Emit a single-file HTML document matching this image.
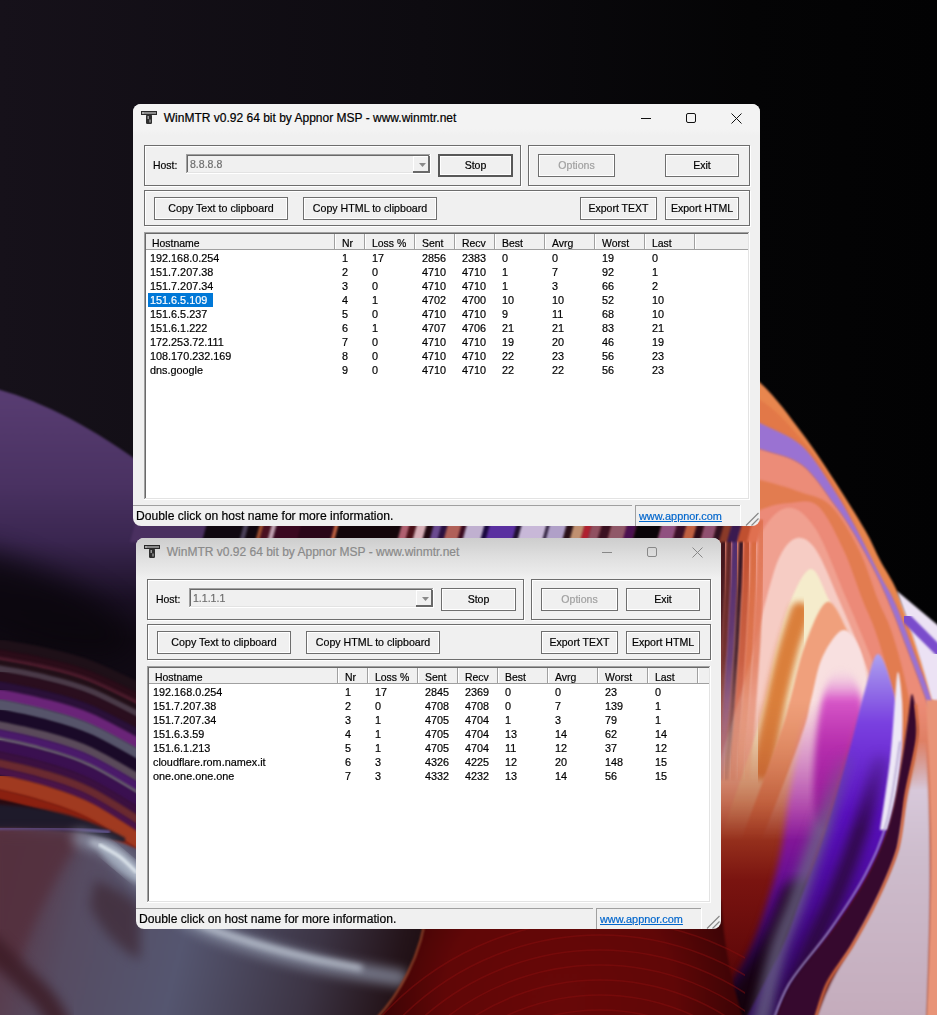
<!DOCTYPE html>
<html><head><meta charset="utf-8">
<style>
html,body{margin:0;padding:0;width:937px;height:1015px;overflow:hidden;background:#08060c;font-family:"Liberation Sans", sans-serif;}
div{position:absolute;box-sizing:content-box}
.t{white-space:nowrap;line-height:1;transform-origin:0 0;-webkit-text-stroke:0.2px currentColor}
</style></head><body>
<svg style="position:absolute;left:0;top:0" width="937" height="1015" viewBox="0 0 937 1015">
<defs>
 <linearGradient id="gTop" x1="0" y1="0" x2="1" y2="0">
  <stop offset="0" stop-color="#16111a"/><stop offset="0.45" stop-color="#0d0b10"/><stop offset="0.8" stop-color="#040405"/><stop offset="1" stop-color="#020203"/>
 </linearGradient>
 <linearGradient id="gPurp" x1="0" y1="380" x2="0" y2="640" gradientUnits="userSpaceOnUse">
  <stop offset="0" stop-color="#5a3e74"/><stop offset="0.4" stop-color="#4a3262"/><stop offset="0.62" stop-color="#3a2650"/><stop offset="0.85" stop-color="#1a1024"/><stop offset="1" stop-color="#100a14"/>
 </linearGradient>
 <linearGradient id="gGray" x1="0" y1="850" x2="430" y2="960" gradientUnits="userSpaceOnUse">
  <stop offset="0" stop-color="#5a3442"/><stop offset="0.2" stop-color="#564c62"/><stop offset="0.45" stop-color="#555670"/><stop offset="0.75" stop-color="#3c3444"/><stop offset="0.93" stop-color="#24141a"/><stop offset="1" stop-color="#1c0c10"/>
 </linearGradient>
 <radialGradient id="gRed" cx="560" cy="1000" r="230" gradientUnits="userSpaceOnUse">
  <stop offset="0" stop-color="#680808"/><stop offset="0.5" stop-color="#600707"/><stop offset="0.8" stop-color="#3a0406"/><stop offset="1" stop-color="#1a0206"/>
 </radialGradient>
 <linearGradient id="gLowR" x1="721" y1="900" x2="903" y2="964" gradientUnits="userSpaceOnUse">
  <stop offset="0" stop-color="#640808"/><stop offset="0.2" stop-color="#6a0a0a"/><stop offset="0.28" stop-color="#3a0a80"/><stop offset="0.4" stop-color="#5a5080"/><stop offset="0.52" stop-color="#5a5070"/><stop offset="0.6" stop-color="#2a0a30"/><stop offset="0.7" stop-color="#4a0c8a"/><stop offset="0.8" stop-color="#2a0830"/><stop offset="1" stop-color="#1c0614"/>
 </linearGradient>
 <radialGradient id="gMag" cx="842" cy="735" r="70" gradientUnits="userSpaceOnUse">
  <stop offset="0" stop-color="#b020a8"/><stop offset="0.6" stop-color="#c040b4"/><stop offset="1" stop-color="#e8a0d8" stop-opacity="0"/>
 </radialGradient>
 <linearGradient id="gPur2" x1="0" y1="650" x2="0" y2="1015" gradientUnits="userSpaceOnUse">
  <stop offset="0" stop-color="#b0a8f0"/><stop offset="0.2" stop-color="#7a40e0"/><stop offset="0.45" stop-color="#5a10c0"/><stop offset="0.7" stop-color="#4a0a98"/><stop offset="1" stop-color="#2a0650"/>
 </linearGradient>
 <linearGradient id="gLav" x1="0" y1="700" x2="0" y2="1015" gradientUnits="userSpaceOnUse">
  <stop offset="0" stop-color="#e4d8ec"/><stop offset="0.5" stop-color="#cdbccc"/><stop offset="1" stop-color="#c4acbc"/>
 </linearGradient>
 <linearGradient id="gFadeIn" x1="0" y1="700" x2="0" y2="840" gradientUnits="userSpaceOnUse">
  <stop offset="0" stop-color="#fff" stop-opacity="0"/><stop offset="1" stop-color="#fff" stop-opacity="1"/>
 </linearGradient>
 <mask id="mIn" maskUnits="userSpaceOnUse" x="600" y="600" width="400" height="500"><rect x="600" y="600" width="400" height="500" fill="url(#gFadeIn)"/></mask>
 <linearGradient id="gLeftLow" x1="0" y1="680" x2="0" y2="1025" gradientUnits="userSpaceOnUse">
  <stop offset="0" stop-color="#d07840"/><stop offset="0.35" stop-color="#b04a28"/><stop offset="0.58" stop-color="#7a1410"/><stop offset="0.78" stop-color="#640a0a"/><stop offset="1" stop-color="#3a0406"/>
 </linearGradient>
 <linearGradient id="gBandM" x1="0" y1="700" x2="0" y2="1025" gradientUnits="userSpaceOnUse">
  <stop offset="0" stop-color="#c040b0"/><stop offset="0.33" stop-color="#9a1c9c"/><stop offset="0.6" stop-color="#5a0c90"/><stop offset="0.8" stop-color="#2a0650"/><stop offset="1" stop-color="#16030c"/>
 </linearGradient>
 <linearGradient id="gVst" x1="0" y1="520" x2="0" y2="800" gradientUnits="userSpaceOnUse">
  <stop offset="0" stop-color="#fff" stop-opacity="1"/><stop offset="0.5" stop-color="#fff" stop-opacity="0.8"/><stop offset="1" stop-color="#fff" stop-opacity="0"/>
 </linearGradient>
 <mask id="mVst" maskUnits="userSpaceOnUse" x="690" y="500" width="100" height="320"><rect x="690" y="500" width="100" height="320" fill="url(#gVst)"/></mask>
 <linearGradient id="gMag2" x1="0" y1="668" x2="0" y2="830" gradientUnits="userSpaceOnUse">
  <stop offset="0" stop-color="#f0c8e8" stop-opacity="0"/><stop offset="0.2" stop-color="#d858c8"/><stop offset="0.5" stop-color="#b82cb0"/><stop offset="1" stop-color="#8a1490"/>
 </linearGradient>
 <linearGradient id="gFadeIn2" x1="0" y1="740" x2="0" y2="830" gradientUnits="userSpaceOnUse">
  <stop offset="0" stop-color="#fff" stop-opacity="0"/><stop offset="1" stop-color="#fff" stop-opacity="1"/>
 </linearGradient>
 <mask id="mIn2" maskUnits="userSpaceOnUse" x="700" y="700" width="300" height="400"><rect x="700" y="700" width="300" height="400" fill="url(#gFadeIn2)"/></mask>
 <linearGradient id="gLavF" x1="0" y1="740" x2="0" y2="790" gradientUnits="userSpaceOnUse">
  <stop offset="0" stop-color="#fff" stop-opacity="0"/><stop offset="1" stop-color="#fff" stop-opacity="1"/>
 </linearGradient>
 <mask id="mLav" maskUnits="userSpaceOnUse" x="780" y="700" width="200" height="340"><rect x="780" y="700" width="200" height="340" fill="url(#gLavF)"/></mask>
 <filter color-interpolation-filters="sRGB" id="b12" x="-30%" y="-60%" width="160%" height="220%"><feGaussianBlur stdDeviation="14"/></filter>
 <filter color-interpolation-filters="sRGB" id="b1" x="-5%" y="-5%" width="110%" height="110%"><feGaussianBlur stdDeviation="0.8"/></filter>
 <filter color-interpolation-filters="sRGB" id="b2" x="-10%" y="-10%" width="120%" height="120%"><feGaussianBlur stdDeviation="1.8"/></filter>
 <filter color-interpolation-filters="sRGB" id="b3" x="-10%" y="-10%" width="120%" height="120%"><feGaussianBlur stdDeviation="3"/></filter>
 <filter color-interpolation-filters="sRGB" id="b6" x="-20%" y="-20%" width="140%" height="140%"><feGaussianBlur stdDeviation="6"/></filter>
</defs><rect x="0" y="0" width="937" height="1015" fill="url(#gTop)"/><path d="M-10 387 C40 400 90 425 150 470 L150 720 L-10 720 Z" fill="url(#gPurp)" filter="url(#b1)"/><ellipse cx="10" cy="600" rx="130" ry="40" transform="rotate(20 10 600)" fill="#0a060c" opacity="0.85" filter="url(#b12)"/><path d="M-10.0 643.4 C-1.7 644.9 23.3 648.5 40.0 652.3 C56.7 656.1 70.0 658.4 90.0 666.1 C110.0 673.8 148.3 693.1 160.0 698.5 " stroke="#1e1018" stroke-width="11.2" fill="none" stroke-linecap="round" filter="url(#b1)"/><path d="M-10.0 651.8 C-1.7 653.4 23.3 657.1 40.0 661.0 C56.7 664.8 70.0 667.2 90.0 675.1 C110.0 682.9 148.3 702.7 160.0 708.2 " stroke="#2a0c18" stroke-width="8.2" fill="none" stroke-linecap="round" filter="url(#b1)"/><path d="M-10.0 657.3 C-1.7 658.9 23.3 662.6 40.0 666.6 C56.7 670.5 70.0 672.9 90.0 680.9 C110.0 688.9 148.3 708.9 160.0 714.5 " stroke="#4a1a2a" stroke-width="5.2" fill="none" stroke-linecap="round" filter="url(#b1)"/><path d="M-10.0 661.8 C-1.7 663.4 23.3 667.2 40.0 671.2 C56.7 675.1 70.0 677.5 90.0 685.6 C110.0 693.7 148.3 714.0 160.0 719.7 " stroke="#221018" stroke-width="6.2" fill="none" stroke-linecap="round" filter="url(#b1)"/><path d="M-10.0 667.3 C-1.7 668.9 23.3 672.7 40.0 676.8 C56.7 680.8 70.0 683.2 90.0 691.4 C110.0 699.7 148.3 720.2 160.0 726.0 " stroke="#4a3a48" stroke-width="7.2" fill="none" stroke-linecap="round" filter="url(#b1)"/><path d="M-10.0 675.2 C-1.7 676.9 23.3 680.8 40.0 684.9 C56.7 689.0 70.0 691.5 90.0 699.9 C110.0 708.3 148.3 729.3 160.0 735.1 " stroke="#2a0e1e" stroke-width="11.2" fill="none" stroke-linecap="round" filter="url(#b1)"/><path d="M-10.0 684.2 C-1.7 685.8 23.3 689.9 40.0 694.1 C56.7 698.3 70.0 700.9 90.0 709.4 C110.0 718.0 148.3 739.4 160.0 745.4 " stroke="#2a1038" stroke-width="9.2" fill="none" stroke-linecap="round" filter="url(#b1)"/><path d="M-10.0 693.2 C-1.7 694.8 23.3 699.0 40.0 703.3 C56.7 707.6 70.0 710.2 90.0 718.9 C110.0 727.7 148.3 749.6 160.0 755.7 " stroke="#6a2478" stroke-width="11.2" fill="none" stroke-linecap="round" filter="url(#b1)"/><path d="M-10.0 703.1 C-1.7 704.8 23.3 709.1 40.0 713.5 C56.7 717.9 70.0 720.5 90.0 729.5 C110.0 738.4 148.3 760.9 160.0 767.2 " stroke="#56546a" stroke-width="11.2" fill="none" stroke-linecap="round" filter="url(#b1)"/><path d="M-10.0 714.1 C-1.7 715.8 23.3 720.2 40.0 724.7 C56.7 729.2 70.0 731.9 90.0 741.1 C110.0 750.3 148.3 773.3 160.0 779.8 " stroke="#1a0a28" stroke-width="13.2" fill="none" stroke-linecap="round" filter="url(#b1)"/><path d="M-10.0 724.0 C-1.7 725.8 23.3 730.3 40.0 734.9 C56.7 739.5 70.0 742.3 90.0 751.7 C110.0 761.1 148.3 784.6 160.0 791.2 " stroke="#5a4a5a" stroke-width="9.2" fill="none" stroke-linecap="round" filter="url(#b1)"/><path d="M-10.0 732.0 C-1.7 733.8 23.3 738.4 40.0 743.1 C56.7 747.7 70.0 750.6 90.0 760.1 C110.0 769.7 148.3 793.7 160.0 800.4 " stroke="#4a1a6a" stroke-width="9.2" fill="none" stroke-linecap="round" filter="url(#b1)"/><path d="M-10.0 737.5 C-1.7 739.3 23.3 743.9 40.0 748.7 C56.7 753.4 70.0 756.3 90.0 766.0 C110.0 775.6 148.3 799.9 160.0 806.7 " stroke="#6a6070" stroke-width="4.2" fill="none" stroke-linecap="round" filter="url(#b1)"/><path d="M-10.0 744.4 C-1.7 746.3 23.3 751.0 40.0 755.8 C56.7 760.6 70.0 763.5 90.0 773.4 C110.0 783.2 148.3 807.8 160.0 814.7 " stroke="#3a1050" stroke-width="12.2" fill="none" stroke-linecap="round" filter="url(#b1)"/><path d="M-10.0 753.9 C-1.7 755.8 23.3 760.6 40.0 765.5 C56.7 770.4 70.0 773.4 90.0 783.4 C110.0 793.4 148.3 818.5 160.0 825.5 " stroke="#3a1040" stroke-width="9.2" fill="none" stroke-linecap="round" filter="url(#b1)"/><path d="M-10.0 761.9 C-1.7 763.8 23.3 768.6 40.0 773.6 C56.7 778.6 70.0 781.7 90.0 791.9 C110.0 802.0 148.3 827.6 160.0 834.7 " stroke="#6a2a30" stroke-width="9.2" fill="none" stroke-linecap="round" filter="url(#b1)"/><path d="M-10.0 769.3 C-1.7 771.3 23.3 776.2 40.0 781.3 C56.7 786.4 70.0 789.4 90.0 799.8 C110.0 810.1 148.3 836.0 160.0 843.3 " stroke="#4a1448" stroke-width="8.2" fill="none" stroke-linecap="round" filter="url(#b1)"/><path d="M-10.0 780.3 C-1.7 782.3 23.3 787.3 40.0 792.5 C56.7 797.7 70.0 800.8 90.0 811.4 C110.0 822.0 148.3 848.5 160.0 855.9 " stroke="#a03a20" stroke-width="16.2" fill="none" stroke-linecap="round" filter="url(#b1)"/><path d="M-10.0 792.7 C-1.7 794.8 23.3 799.9 40.0 805.3 C56.7 810.6 70.0 813.8 90.0 824.6 C110.0 835.4 148.3 862.6 160.0 870.2 " stroke="#8a2010" stroke-width="11.2" fill="none" stroke-linecap="round" filter="url(#b1)"/><path d="M-10.0 800.7 C-1.7 802.8 23.3 808.0 40.0 813.4 C56.7 818.8 70.0 822.1 90.0 833.1 C110.0 844.1 148.3 871.6 160.0 879.3 " stroke="#2a0a10" stroke-width="7.2" fill="none" stroke-linecap="round" filter="url(#b1)"/><path d="M-10 804 C40 806 80 814 125 838 L125 842 L-10 832 Z" fill="#1e1a2a" filter="url(#b2)"/><path d="M-10 828 C50 828 100 832 140 850 C240 895 360 895 428 900 C425 950 400 995 372 1025 L-10 1025 Z" fill="url(#gGray)" filter="url(#b1)"/><path d="M-10 829 C30 828 70 828 110 832" stroke="#6a58a0" stroke-width="2.5" fill="none" filter="url(#b1)"/><path d="M-10 832 L85 832 C60 870 35 915 18 965 L-10 965 Z" fill="#54303e" opacity="0.9" filter="url(#b6)"/><path d="M-10.0 945.0 C-5.0 950.0 10.8 965.8 20.0 975.0 C29.2 984.2 38.3 991.7 45.0 1000.0 C51.7 1008.3 57.5 1020.8 60.0 1025.0 " stroke="#3c1c26" stroke-width="22" fill="none" stroke-linecap="round" opacity="0.85" filter="url(#b6)"/><path d="M95 880 C120 890 136 900 140 910 L140 960 C120 950 100 930 90 905 Z" fill="#3e2834" opacity="0.7" filter="url(#b6)"/><ellipse cx="122" cy="862" rx="30" ry="9" transform="rotate(40 122 862)" fill="#b0bccb" opacity="0.9" filter="url(#b3)"/><path d="M80.0 838.0 C85.0 840.0 100.0 843.3 110.0 850.0 C120.0 856.7 130.0 868.8 140.0 878.0 C150.0 887.2 160.0 897.0 170.0 905.0 C180.0 913.0 185.0 918.8 200.0 926.0 C215.0 933.2 238.3 941.3 260.0 948.0 C281.7 954.7 306.7 961.0 330.0 966.0 C353.3 971.0 388.3 976.0 400.0 978.0 " stroke="#9098ac" stroke-width="16" fill="none" stroke-linecap="round" opacity="0.75" filter="url(#b6)"/><path d="M92.0 842.0 C95.8 843.8 107.0 847.3 115.0 853.0 C123.0 858.7 130.8 867.7 140.0 876.0 C149.2 884.3 160.0 895.0 170.0 903.0 C180.0 911.0 186.7 917.5 200.0 924.0 C213.3 930.5 231.7 936.3 250.0 942.0 C268.3 947.7 291.7 953.7 310.0 958.0 C328.3 962.3 351.7 966.3 360.0 968.0 " stroke="#c4ccd8" stroke-width="5" fill="none" stroke-linecap="round" filter="url(#b3)"/><path d="M100.0 845.0 C103.3 847.0 114.0 852.5 120.0 857.0 C126.0 861.5 133.3 869.5 136.0 872.0 " stroke="#d8e0e8" stroke-width="3" fill="none" stroke-linecap="round" filter="url(#b1)"/><path d="M600.0 290.0 C616.7 298.0 673.3 322.6 700.0 338.0 C726.7 353.4 743.0 366.7 760.0 382.5 C777.0 398.3 789.7 416.8 802.0 433.0 C814.3 449.2 823.5 463.8 834.0 480.0 C844.5 496.2 857.3 516.7 865.0 530.0 C872.7 543.3 874.7 549.8 880.0 560.0 C885.3 570.2 890.7 576.8 897.0 591.0 C903.3 605.2 911.7 627.2 918.0 645.0 C924.3 662.8 928.0 677.2 935.0 698.0 C942.0 718.8 955.8 758.0 960.0 770.0 L960 1025 L600 1025 Z" fill="#e8864e" filter="url(#b1)"/><path d="M600.0 330.0 C616.7 338.3 673.3 368.3 700.0 380.0 C726.7 391.7 743.0 390.0 760.0 400.0 C777.0 410.0 789.7 426.0 802.0 440.0 C814.3 454.0 824.8 469.0 834.0 484.0 C843.2 499.0 849.3 514.0 857.0 530.0 C864.7 546.0 873.5 567.5 880.0 580.0 C886.5 592.5 889.8 591.7 896.0 605.0 C902.2 618.3 911.0 644.2 917.0 660.0 C923.0 675.8 927.3 685.8 932.0 700.0 C936.7 714.2 942.8 737.5 945.0 745.0 L945 1025 L600 1025 Z" fill="#e27848" filter="url(#b1)"/><path d="M620.0 400.0 C633.3 405.0 676.7 421.8 700.0 430.0 C723.3 438.2 743.0 443.2 760.0 449.0 C777.0 454.8 789.7 455.8 802.0 465.0 C814.3 474.2 825.5 492.8 834.0 504.0 C842.5 515.2 846.3 521.0 853.0 532.0 C859.7 543.0 867.5 557.0 874.0 570.0 C880.5 583.0 885.7 594.7 892.0 610.0 C898.3 625.3 906.0 646.2 912.0 662.0 C918.0 677.8 922.5 690.0 928.0 705.0 C933.5 720.0 942.2 744.2 945.0 752.0 L945 1025 L620 1025 Z" fill="#ec8c78" filter="url(#b1)"/><path d="M700.0 392.0 C710.0 397.2 743.0 414.0 760.0 423.0 C777.0 432.0 789.7 434.8 802.0 446.0 C814.3 457.2 824.8 476.0 834.0 490.0 C843.2 504.0 849.3 515.8 857.0 530.0 C864.7 544.2 873.5 562.5 880.0 575.0 C886.5 587.5 889.8 590.8 896.0 605.0 C902.2 619.2 911.0 644.2 917.0 660.0 C923.0 675.8 927.3 685.8 932.0 700.0 C936.7 714.2 942.8 737.5 945.0 745.0  L945 752 945.0 752.0 C942.2 744.2 933.5 720.0 928.0 705.0 C922.5 690.0 918.0 677.8 912.0 662.0 C906.0 646.2 898.3 625.3 892.0 610.0 C885.7 594.7 880.5 583.0 874.0 570.0 C867.5 557.0 859.7 543.0 853.0 532.0 C846.3 521.0 842.5 515.2 834.0 504.0 C825.5 492.8 814.3 474.2 802.0 465.0 C789.7 455.8 777.0 454.8 760.0 449.0 C743.0 443.2 723.3 438.2 700.0 430.0 C676.7 421.8 633.3 405.0 620.0 400.0  Z" fill="#9a72d2" filter="url(#b1)"/><path d="M620.0 455.0 C633.3 457.2 676.7 463.8 700.0 468.0 C723.3 472.2 743.3 476.0 760.0 480.0 C776.7 484.0 788.2 487.7 800.0 492.0 C811.8 496.3 821.2 496.3 831.0 506.0 C840.8 515.7 851.2 534.3 859.0 550.0 C866.8 565.7 872.7 586.7 878.0 600.0 C883.3 613.3 886.5 616.7 891.0 630.0 C895.5 643.3 901.0 661.7 905.0 680.0 C909.0 698.3 912.8 713.3 915.0 740.0 C917.2 766.7 917.5 823.3 918.0 840.0 L918 1025 L620 1025 Z" fill="#e27c50" filter="url(#b1)"/><path d="M620.0 560.0 C633.3 556.7 676.7 548.3 700.0 540.0 C723.3 531.7 745.0 516.2 760.0 510.0 C775.0 503.8 780.3 503.7 790.0 503.0 C799.7 502.3 809.1 498.2 818.0 506.0 C826.9 513.8 836.2 534.3 843.6 550.0 C851.0 565.7 857.4 586.7 862.6 600.0 C867.8 613.3 870.4 616.7 875.0 630.0 C879.6 643.3 885.3 661.7 890.0 680.0 C894.7 698.3 899.7 713.3 903.0 740.0 C906.3 766.7 908.8 823.3 910.0 840.0 L910 1025 L620 1025 Z" fill="#ec8a78" filter="url(#b1)"/><path d="M897 591 L940 627 L940 705 L932 700 C925 675 915 640 900 600 Z" fill="#ece2f4" filter="url(#b1)"/><path d="M906.0 618.0 C911.7 623.7 934.3 646.3 940.0 652.0 " stroke="#7a4ccc" stroke-width="10" fill="none" stroke-linecap="round" filter="url(#b1)"/><path d="M675.0 870.0 C685.0 828.3 721.2 675.0 735.0 620.0 C748.8 565.0 749.5 558.7 758.0 540.0 C766.5 521.3 776.5 510.0 786.0 508.0 C795.5 506.0 804.8 512.7 815.0 528.0 C825.2 543.3 837.5 578.0 847.0 600.0 C856.5 622.0 865.5 643.3 872.0 660.0 C878.5 676.7 880.5 683.3 886.0 700.0 C891.5 716.7 900.7 731.7 905.0 760.0 C909.3 788.3 910.8 851.7 912.0 870.0  Z" fill="#f0a090" filter="url(#b1)"/><path d="M685.0 870.0 C695.0 838.3 731.5 725.0 745.0 680.0 C758.5 635.0 760.2 620.7 766.0 600.0 C771.8 579.3 774.8 566.3 780.0 556.0 C785.2 545.7 791.0 539.0 797.0 538.0 C803.0 537.0 809.0 539.7 816.0 550.0 C823.0 560.3 831.7 583.3 839.0 600.0 C846.3 616.7 853.5 633.3 860.0 650.0 C866.5 666.7 871.7 681.7 878.0 700.0 C884.3 718.3 894.0 731.7 898.0 760.0 C902.0 788.3 901.3 851.7 902.0 870.0  Z" fill="#f6ccc4" filter="url(#b1)"/><path d="M710.0 870.0 C718.3 845.0 749.0 756.7 760.0 720.0 C771.0 683.3 770.8 670.0 776.0 650.0 C781.2 630.0 785.2 613.5 791.0 600.0 C796.8 586.5 804.7 569.0 811.0 569.0 C817.3 569.0 822.2 586.5 829.0 600.0 C835.8 613.5 845.2 633.3 852.0 650.0 C858.8 666.7 864.0 681.7 870.0 700.0 C876.0 718.3 884.3 731.7 888.0 760.0 C891.7 788.3 891.3 851.7 892.0 870.0  Z" fill="#f5eccc" filter="url(#b1)"/><path d="M800.0 612.0 C798.0 618.3 792.0 635.3 788.0 650.0 C784.0 664.7 780.3 680.0 776.0 700.0 C771.7 720.0 764.3 758.3 762.0 770.0 " stroke="#d8742c" stroke-width="20" fill="none" stroke-linecap="round" opacity="0.9" filter="url(#b3)"/><path d="M730.0 870.0 C738.0 848.3 768.0 768.3 778.0 740.0 C788.0 711.7 785.5 715.8 790.0 700.0 C794.5 684.2 798.8 661.3 805.0 645.0 C811.2 628.7 820.0 604.5 827.0 602.0 C834.0 599.5 841.8 620.3 847.0 630.0 C852.2 639.7 854.8 648.3 858.0 660.0 C861.2 671.7 862.7 683.3 866.0 700.0 C869.3 716.7 875.3 731.7 878.0 760.0 C880.7 788.3 881.3 851.7 882.0 870.0  Z" fill="#f0a07c" filter="url(#b1)"/><path d="M750.0 870.0 C758.3 848.3 789.8 768.3 800.0 740.0 C810.2 711.7 807.3 713.7 811.0 700.0 C814.7 686.3 816.7 669.7 822.0 658.0 C827.3 646.3 836.7 631.3 843.0 630.0 C849.3 628.7 855.5 638.3 860.0 650.0 C864.5 661.7 867.7 681.7 870.0 700.0 C872.3 718.3 872.7 731.7 874.0 760.0 C875.3 788.3 877.3 851.7 878.0 870.0  Z" fill="#f8e0e0" filter="url(#b1)"/><path d="M842 668 C862 672 868 720 864 760 C860 800 840 830 825 830 C812 830 812 790 815 750 C818 710 826 666 842 668 Z" fill="url(#gMag2)" filter="url(#b3)"/><g mask="url(#mIn)"><rect x="700" y="680" width="240" height="345" fill="url(#gLeftLow)"/><path d="M700.0 1030.0 C707.5 1018.3 733.7 981.7 745.0 960.0 C756.3 938.3 762.0 918.3 768.0 900.0 C774.0 881.7 777.3 868.3 781.0 850.0 C784.7 831.7 786.0 811.7 790.0 790.0 C794.0 768.3 800.0 736.7 805.0 720.0 C810.0 703.3 817.5 695.0 820.0 690.0  L865 690 865.0 690.0 C862.8 698.3 857.0 721.7 852.0 740.0 C847.0 758.3 840.5 781.7 835.0 800.0 C829.5 818.3 824.8 833.3 819.0 850.0 C813.2 866.7 806.3 883.3 800.0 900.0 C793.7 916.7 787.7 928.3 781.0 950.0 C774.3 971.7 763.5 1016.7 760.0 1030.0  Z" fill="url(#gBandM)" filter="url(#b3)"/><path d="M720.0 1040.0 C726.7 1030.8 749.2 1001.7 760.0 985.0 C770.8 968.3 778.3 954.2 785.0 940.0 C791.7 925.8 797.5 906.7 800.0 900.0 " stroke="#14020a" stroke-width="40" fill="none" stroke-linecap="round" opacity="0.85" filter="url(#b6)"/></g><path d="M740.0 1030.0 C746.8 1016.7 771.0 971.7 781.0 950.0 C791.0 928.3 793.7 916.7 800.0 900.0 C806.3 883.3 813.2 866.7 819.0 850.0 C824.8 833.3 829.5 818.3 835.0 800.0 C840.5 781.7 847.0 758.3 852.0 740.0 C857.0 721.7 860.7 704.3 865.0 690.0 C869.3 675.7 873.3 654.0 878.0 654.0 C882.7 654.0 889.2 675.7 893.0 690.0 C896.8 704.3 901.5 718.2 901.0 740.0 C900.5 761.8 895.5 798.5 890.0 821.0 C884.5 843.5 877.5 856.8 868.0 875.0 C858.5 893.2 845.7 911.8 833.0 930.0 C820.3 948.2 802.2 967.3 792.0 984.0 C781.8 1000.7 775.3 1022.3 772.0 1030.0  Z" fill="url(#gPur2)" filter="url(#b1)"/><g mask="url(#mIn2)"><path d="M845.0 760.0 C842.2 768.3 833.5 794.2 828.0 810.0 C822.5 825.8 817.5 839.2 812.0 855.0 C806.5 870.8 800.7 889.2 795.0 905.0 C789.3 920.8 783.8 930.0 778.0 950.0 C772.2 970.0 763.0 1012.5 760.0 1025.0 " stroke="#6a6486" stroke-width="16" fill="none" stroke-linecap="round" opacity="0.85" filter="url(#b6)"/></g><g mask="url(#mIn2)"><path d="M880.0 760.0 C876.7 771.7 867.0 808.3 860.0 830.0 C853.0 851.7 845.5 871.7 838.0 890.0 C830.5 908.3 823.0 921.7 815.0 940.0 C807.0 958.3 794.2 990.0 790.0 1000.0 " stroke="#2a0a34" stroke-width="16" fill="none" stroke-linecap="round" opacity="0.85" filter="url(#b6)"/></g><path d="M880.0 830.0 C881.7 818.3 887.5 781.7 890.0 760.0 C892.5 738.3 893.7 714.7 895.0 700.0 C896.3 685.3 896.8 672.0 898.0 672.0 C899.2 672.0 901.3 688.7 902.0 700.0 C902.7 711.3 902.8 725.0 902.0 740.0 C901.2 755.0 899.3 775.0 897.0 790.0 C894.7 805.0 889.5 823.3 888.0 830.0  Z" fill="#eee8f6" filter="url(#b1)"/><path d="M900.0 742.0 C897.8 755.2 892.8 798.8 887.0 821.0 C881.2 843.2 874.5 856.8 865.0 875.0 C855.5 893.2 842.7 911.8 830.0 930.0 C817.3 948.2 799.0 967.3 789.0 984.0 C779.0 1000.7 773.2 1022.3 770.0 1030.0 " stroke="#b0a0d0" stroke-width="1.6" fill="none" stroke-linecap="round" filter="url(#b1)"/><path d="M772.0 1030.0 C775.3 1022.3 781.8 1000.7 792.0 984.0 C802.2 967.3 820.3 948.2 833.0 930.0 C845.7 911.8 858.5 893.2 868.0 875.0 C877.5 856.8 884.3 840.2 890.0 821.0 C895.7 801.8 899.0 776.8 902.0 760.0 C905.0 743.2 906.3 731.0 908.0 720.0 C909.7 709.0 910.5 694.0 912.0 694.0 C913.5 694.0 916.2 712.3 917.0 720.0 C917.8 727.7 918.8 727.7 917.0 740.0 C915.2 752.3 909.2 776.0 906.0 794.0 C902.8 812.0 903.0 830.0 898.0 848.0 C893.0 866.0 883.7 885.7 876.0 902.0 C868.3 918.3 860.2 932.3 852.0 946.0 C843.8 959.7 833.7 970.0 827.0 984.0 C820.3 998.0 814.5 1022.3 812.0 1030.0  Z" fill="#36092e" filter="url(#b1)"/><path d="M917 740 C912 780 906 794 898 848 C890 875 876 902 852 946 C840 965 827 984 812 1030 L927 1030 C932 900 932 840 926 740 Z" fill="url(#gLav)" mask="url(#mLav)" filter="url(#b2)"/><path d="M916.0 705.0 C916.2 710.8 918.7 725.2 917.0 740.0 C915.3 754.8 909.2 776.0 906.0 794.0 C902.8 812.0 903.0 830.0 898.0 848.0 C893.0 866.0 883.7 885.7 876.0 902.0 C868.3 918.3 860.2 932.3 852.0 946.0 C843.8 959.7 833.7 970.0 827.0 984.0 C820.3 998.0 814.5 1022.3 812.0 1030.0 " stroke="#d86c40" stroke-width="2.5" fill="none" stroke-linecap="round" filter="url(#b1)"/><path d="M926 700 C932 800 932 900 926 1025 L940 1025 L940 700 Z" fill="#e89478" filter="url(#b1)"/><path d="M724 520 C722 600 718 680 708 780" stroke="#3a1018" stroke-width="7" fill="none" mask="url(#mVst)" filter="url(#b1)"/><path d="M730 520 C728 600 724 680 714 780" stroke="#5a2020" stroke-width="6" fill="none" mask="url(#mVst)" filter="url(#b1)"/><path d="M736 520 C734 600 730 680 720 780" stroke="#4a2a70" stroke-width="7" fill="none" mask="url(#mVst)" filter="url(#b1)"/><path d="M742 520 C740 600 736 680 726 780" stroke="#2a1020" stroke-width="5" fill="none" mask="url(#mVst)" filter="url(#b1)"/><path d="M748 520 C746 600 742 680 732 780" stroke="#c05030" stroke-width="7" fill="none" mask="url(#mVst)" filter="url(#b1)"/><path d="M755 520 C753 600 749 680 739 780" stroke="#d86a40" stroke-width="7" fill="none" mask="url(#mVst)" filter="url(#b1)"/><path d="M762 520 C760 600 756 680 746 780" stroke="#e07858" stroke-width="7" fill="none" mask="url(#mVst)" filter="url(#b1)"/><path d="M428 900 C425 950 400 995 372 1025 L745 1025 C735 990 725 960 721 900 Z" fill="url(#gRed)" filter="url(#b1)"/><path d="M427 905 C423 955 398 998 370 1025" stroke="#9a4428" stroke-width="2" fill="none" filter="url(#b1)"/><clipPath id="cRed"><path d="M428 900 C425 950 400 995 372 1025 L745 1025 L745 900 Z"/></clipPath><g clip-path="url(#cRed)"><circle cx="600" cy="1216" r="206" stroke="#8c1010" stroke-width="1.6" fill="none" opacity="0.45"/><circle cx="600" cy="1216" r="221" stroke="#8c1010" stroke-width="1.6" fill="none" opacity="0.45"/><circle cx="600" cy="1216" r="236" stroke="#8c1010" stroke-width="1.6" fill="none" opacity="0.45"/><circle cx="600" cy="1216" r="251" stroke="#8c1010" stroke-width="1.6" fill="none" opacity="0.45"/><circle cx="600" cy="1216" r="266" stroke="#8c1010" stroke-width="1.6" fill="none" opacity="0.45"/><circle cx="600" cy="1216" r="281" stroke="#8c1010" stroke-width="1.6" fill="none" opacity="0.45"/><circle cx="600" cy="1216" r="296" stroke="#8c1010" stroke-width="1.6" fill="none" opacity="0.45"/></g><g filter="url(#b1)"><polygon points="136,520 208,520 202,542 130,542" fill="#4a3060"/><polygon points="208,520 245,520 239,542 202,542" fill="#100810"/><polygon points="245,520 250,520 244,542 239,542" fill="#4a4058"/><polygon points="250,520 261,520 255,542 244,542" fill="#120810"/><polygon points="261,520 265,520 259,542 255,542" fill="#a05030"/><polygon points="265,520 273,520 267,542 259,542" fill="#4a1020"/><polygon points="273,520 278,520 272,542 267,542" fill="#c0a0b0"/><polygon points="278,520 303,520 297,542 272,542" fill="#3a0820"/><polygon points="303,520 336,520 330,542 297,542" fill="#2a0618"/><polygon points="336,520 340,520 334,542 330,542" fill="#c06040"/><polygon points="340,520 403,520 397,542 334,542" fill="#14060a"/><polygon points="403,520 411,520 405,542 397,542" fill="#b06070"/><polygon points="411,520 418,520 412,542 405,542" fill="#4a1018"/><polygon points="418,520 428,520 422,542 412,542" fill="#d8b0b8"/><polygon points="428,520 435,520 429,542 422,542" fill="#200810"/><polygon points="435,520 443,520 437,542 429,542" fill="#6a4a90"/><polygon points="443,520 449,520 443,542 437,542" fill="#2a1040"/><polygon points="449,520 463,520 457,542 443,542" fill="#b06058"/><polygon points="463,520 468,520 462,542 457,542" fill="#3a0a20"/><polygon points="468,520 486,520 480,542 462,542" fill="#c0b0d0"/><polygon points="486,520 491,520 485,542 480,542" fill="#1a0840"/><polygon points="491,520 518,520 512,542 485,542" fill="#5a30a0"/><polygon points="518,520 523,520 517,542 512,542" fill="#201030"/><polygon points="523,520 548,520 542,542 517,542" fill="#c8b8d8"/><polygon points="548,520 551,520 545,542 542,542" fill="#302040"/><polygon points="551,520 568,520 562,542 545,542" fill="#b0a0c8"/><polygon points="568,520 575,520 569,542 562,542" fill="#2a1018"/><polygon points="575,520 586,520 580,542 569,542" fill="#c09070"/><polygon points="586,520 593,520 587,542 580,542" fill="#b02030"/><polygon points="593,520 603,520 597,542 587,542" fill="#905060"/><polygon points="603,520 613,520 607,542 597,542" fill="#3a1020"/><polygon points="613,520 628,520 622,542 607,542" fill="#905868"/><polygon points="628,520 638,520 632,542 622,542" fill="#4a1050"/><polygon points="638,520 663,520 657,542 632,542" fill="#0a0408"/><polygon points="663,520 678,520 672,542 657,542" fill="#905080"/><polygon points="678,520 688,520 682,542 672,542" fill="#3a1028"/><polygon points="688,520 698,520 692,542 682,542" fill="#c06040"/><polygon points="698,520 706,520 700,542 692,542" fill="#2a0a18"/><polygon points="706,520 718,520 712,542 700,542" fill="#905070"/><polygon points="718,520 725,520 719,542 712,542" fill="#301020"/><polygon points="725,520 733,520 727,542 719,542" fill="#8a3a28"/><polygon points="733,520 743,520 737,542 727,542" fill="#3a1a50"/><polygon points="743,520 753,520 747,542 737,542" fill="#c05030"/><polygon points="753,520 763,520 757,542 747,542" fill="#e07050"/></g></svg>
<div style="left:133px;top:104px;width:627px;height:422px;background:#f0f0f0;border-radius:8px;overflow:hidden"><div style="left:0;top:0;width:627px;height:31px;background:linear-gradient(#f3f3f3,#f3f3f3 80%,#f0f0f0)"></div></div><svg style="position:absolute;left:141px;top:111px" width="17" height="14" viewBox="0 0 17 14">
<rect x="0.5" y="0.5" width="15" height="3" fill="#8a8a8a" stroke="#2a2a2a" stroke-width="1"/>
<rect x="1.5" y="1.5" width="1" height="1" fill="#fff"/>
<rect x="5" y="3.5" width="6" height="9.5" rx="1.2" fill="#2e2e2e"/>
<rect x="6.5" y="5" width="1.5" height="3" fill="#9a9a9a"/><rect x="8" y="8.5" width="2" height="3" fill="#777"/>
</svg><div class="t" style="left:163.8px;top:112.44px;font-size:12px;color:#000;transform:scaleX(1.0);">WinMTR v0.92 64 bit by Appnor MSP - www.winmtr.net</div><svg style="position:absolute;left:630px;top:104px" width="130" height="30" viewBox="0 0 130 30">
<line x1="11" y1="14.5" x2="21" y2="14.5" stroke="#111" stroke-width="1"/>
<rect x="56.5" y="9.5" width="9" height="9" rx="1.5" fill="none" stroke="#111" stroke-width="1"/>
<path d="M101.5 9.5 L111.5 19.5 M111.5 9.5 L101.5 19.5" stroke="#111" stroke-width="1"/>
</svg><div style="left:144px;top:145px;width:377px;height:1px;background:#6d6d6d"></div><div style="left:144px;top:145px;width:1px;height:41px;background:#6d6d6d"></div><div style="left:144px;top:185px;width:377px;height:1px;background:#6d6d6d"></div><div style="left:520px;top:145px;width:1px;height:41px;background:#6d6d6d"></div><div style="left:145px;top:146px;width:375px;height:1px;background:#fff"></div><div style="left:145px;top:146px;width:1px;height:39px;background:#fff"></div><div style="left:145px;top:186px;width:377px;height:1px;background:#fff"></div><div style="left:521px;top:146px;width:1px;height:41px;background:#fff"></div><div style="left:528px;top:145px;width:222px;height:1px;background:#6d6d6d"></div><div style="left:528px;top:145px;width:1px;height:41px;background:#6d6d6d"></div><div style="left:528px;top:185px;width:222px;height:1px;background:#6d6d6d"></div><div style="left:749px;top:145px;width:1px;height:41px;background:#6d6d6d"></div><div style="left:529px;top:146px;width:220px;height:1px;background:#fff"></div><div style="left:529px;top:146px;width:1px;height:39px;background:#fff"></div><div style="left:529px;top:186px;width:222px;height:1px;background:#fff"></div><div style="left:750px;top:146px;width:1px;height:41px;background:#fff"></div><div style="left:144px;top:190px;width:606px;height:1px;background:#6d6d6d"></div><div style="left:144px;top:190px;width:1px;height:36px;background:#6d6d6d"></div><div style="left:144px;top:225px;width:606px;height:1px;background:#6d6d6d"></div><div style="left:749px;top:190px;width:1px;height:36px;background:#6d6d6d"></div><div style="left:145px;top:191px;width:604px;height:1px;background:#fff"></div><div style="left:145px;top:191px;width:1px;height:34px;background:#fff"></div><div style="left:145px;top:226px;width:606px;height:1px;background:#fff"></div><div style="left:750px;top:191px;width:1px;height:36px;background:#fff"></div><div class="t" style="left:153px;top:160.19px;font-size:11px;color:#000;transform:scaleX(0.95);">Host:</div><div style="left:187px;top:154px;width:244px;height:20px;background:#f0f0f0"></div><div style="left:186px;top:154px;width:245px;height:1px;background:#a0a0a0"></div><div style="left:186px;top:154px;width:1px;height:20px;background:#a0a0a0"></div><div style="left:187px;top:155px;width:243px;height:1px;background:#696969"></div><div style="left:187px;top:155px;width:1px;height:18px;background:#696969"></div><div style="left:186px;top:173px;width:245px;height:1px;background:#fff"></div><div style="left:430px;top:154px;width:1px;height:20px;background:#fff"></div><div style="left:187px;top:172px;width:243px;height:1px;background:#e3e3e3"></div><div style="left:429px;top:155px;width:1px;height:18px;background:#e3e3e3"></div><div class="t" style="left:190px;top:159.29px;font-size:11px;color:#6d6d6d;transform:scaleX(0.96);">8.8.8.8</div><div style="left:413px;top:156px;width:16px;height:16px;background:#f0f0f0"></div><div style="left:413px;top:156px;width:16px;height:1px;background:#fff"></div><div style="left:413px;top:156px;width:1px;height:16px;background:#fff"></div><div style="left:413px;top:171px;width:17px;height:2px;background:#696969"></div><div style="left:428px;top:156px;width:2px;height:17px;background:#696969"></div><svg style="position:absolute;left:418.5px;top:163px" width="8" height="5"><path d="M0 0 L7 0 L3.5 4 Z" fill="#8a8a8a"/></svg><div style="left:438px;top:154px;width:71px;height:19px;border:2px solid #585858;background:#f0f0f0"></div><div style="left:440px;top:156px;width:69px;height:17px;border:1px solid #fff"></div><div class="t" style="left:438px;width:75px;text-align:center;top:159.59px;font-size:11px;color:#000;transform:scaleX(0.96);transform-origin:50% 0;">Stop</div><div style="left:538px;top:154px;width:75px;height:21px;border:1px solid #6e6e6e;background:#f0f0f0"></div><div style="left:539px;top:155px;width:73px;height:19px;border:1px solid #fff"></div><div class="t" style="left:538px;width:77px;text-align:center;top:159.59px;font-size:11px;color:#a0a0a0;transform:scaleX(0.96);transform-origin:50% 0;">Options</div><div style="left:665px;top:154px;width:72px;height:21px;border:1px solid #6e6e6e;background:#f0f0f0"></div><div style="left:666px;top:155px;width:70px;height:19px;border:1px solid #fff"></div><div class="t" style="left:665px;width:74px;text-align:center;top:159.59px;font-size:11px;color:#000;transform:scaleX(0.96);transform-origin:50% 0;">Exit</div><div style="left:154px;top:197px;width:132px;height:21px;border:1px solid #6e6e6e;background:#f0f0f0"></div><div style="left:155px;top:198px;width:130px;height:19px;border:1px solid #fff"></div><div class="t" style="left:154px;width:134px;text-align:center;top:202.59px;font-size:11px;color:#000;transform:scaleX(0.97);transform-origin:50% 0;">Copy Text to clipboard</div><div style="left:303px;top:197px;width:132px;height:21px;border:1px solid #6e6e6e;background:#f0f0f0"></div><div style="left:304px;top:198px;width:130px;height:19px;border:1px solid #fff"></div><div class="t" style="left:303px;width:134px;text-align:center;top:202.59px;font-size:11px;color:#000;transform:scaleX(0.968);transform-origin:50% 0;">Copy HTML to clipboard</div><div style="left:580px;top:197px;width:75px;height:21px;border:1px solid #6e6e6e;background:#f0f0f0"></div><div style="left:581px;top:198px;width:73px;height:19px;border:1px solid #fff"></div><div class="t" style="left:580px;width:77px;text-align:center;top:202.59px;font-size:11px;color:#000;transform:scaleX(0.955);transform-origin:50% 0;">Export TEXT</div><div style="left:665px;top:197px;width:72px;height:21px;border:1px solid #6e6e6e;background:#f0f0f0"></div><div style="left:666px;top:198px;width:70px;height:19px;border:1px solid #fff"></div><div class="t" style="left:665px;width:74px;text-align:center;top:202.59px;font-size:11px;color:#000;transform:scaleX(0.96);transform-origin:50% 0;">Export HTML</div><div style="left:144px;top:232px;width:606px;height:268px;background:#fff"></div><div style="left:144px;top:232px;width:606px;height:1px;background:#a0a0a0"></div><div style="left:144px;top:232px;width:1px;height:268px;background:#a0a0a0"></div><div style="left:145px;top:233px;width:604px;height:1px;background:#696969"></div><div style="left:145px;top:233px;width:1px;height:266px;background:#696969"></div><div style="left:144px;top:499px;width:606px;height:1px;background:#fff"></div><div style="left:749px;top:232px;width:1px;height:268px;background:#fff"></div><div style="left:145px;top:498px;width:604px;height:1px;background:#e3e3e3"></div><div style="left:748px;top:233px;width:1px;height:266px;background:#e3e3e3"></div><div style="left:146px;top:234px;width:602px;height:15px;background:#f0f0f0"></div><div style="left:146px;top:249px;width:602px;height:1px;background:#a0a0a0"></div><div class="t" style="left:152px;top:237.69px;font-size:11px;color:#000;transform:scaleX(0.95);">Hostname</div><div style="left:334px;top:234px;width:1px;height:15px;background:#a0a0a0"></div><div style="left:335px;top:234px;width:1px;height:15px;background:#fff"></div><div class="t" style="left:342px;top:237.69px;font-size:11px;color:#000;transform:scaleX(0.95);">Nr</div><div style="left:364px;top:234px;width:1px;height:15px;background:#a0a0a0"></div><div style="left:365px;top:234px;width:1px;height:15px;background:#fff"></div><div class="t" style="left:372px;top:237.69px;font-size:11px;color:#000;transform:scaleX(0.95);">Loss %</div><div style="left:414px;top:234px;width:1px;height:15px;background:#a0a0a0"></div><div style="left:415px;top:234px;width:1px;height:15px;background:#fff"></div><div class="t" style="left:422px;top:237.69px;font-size:11px;color:#000;transform:scaleX(0.95);">Sent</div><div style="left:454px;top:234px;width:1px;height:15px;background:#a0a0a0"></div><div style="left:455px;top:234px;width:1px;height:15px;background:#fff"></div><div class="t" style="left:462px;top:237.69px;font-size:11px;color:#000;transform:scaleX(0.95);">Recv</div><div style="left:494px;top:234px;width:1px;height:15px;background:#a0a0a0"></div><div style="left:495px;top:234px;width:1px;height:15px;background:#fff"></div><div class="t" style="left:502px;top:237.69px;font-size:11px;color:#000;transform:scaleX(0.95);">Best</div><div style="left:544px;top:234px;width:1px;height:15px;background:#a0a0a0"></div><div style="left:545px;top:234px;width:1px;height:15px;background:#fff"></div><div class="t" style="left:552px;top:237.69px;font-size:11px;color:#000;transform:scaleX(0.95);">Avrg</div><div style="left:594px;top:234px;width:1px;height:15px;background:#a0a0a0"></div><div style="left:595px;top:234px;width:1px;height:15px;background:#fff"></div><div class="t" style="left:602px;top:237.69px;font-size:11px;color:#000;transform:scaleX(0.95);">Worst</div><div style="left:644px;top:234px;width:1px;height:15px;background:#a0a0a0"></div><div style="left:645px;top:234px;width:1px;height:15px;background:#fff"></div><div class="t" style="left:652px;top:237.69px;font-size:11px;color:#000;transform:scaleX(0.95);">Last</div><div style="left:694px;top:234px;width:1px;height:15px;background:#a0a0a0"></div><div style="left:695px;top:234px;width:1px;height:15px;background:#fff"></div><div class="t" style="left:150px;top:253.09px;font-size:11px;color:#000;transform:scaleX(0.985);">192.168.0.254</div><div class="t" style="left:342px;top:253.09px;font-size:11px;color:#000;transform:scaleX(0.985);">1</div><div class="t" style="left:372px;top:253.09px;font-size:11px;color:#000;transform:scaleX(0.985);">17</div><div class="t" style="left:422px;top:253.09px;font-size:11px;color:#000;transform:scaleX(0.985);">2856</div><div class="t" style="left:462px;top:253.09px;font-size:11px;color:#000;transform:scaleX(0.985);">2383</div><div class="t" style="left:502px;top:253.09px;font-size:11px;color:#000;transform:scaleX(0.985);">0</div><div class="t" style="left:552px;top:253.09px;font-size:11px;color:#000;transform:scaleX(0.985);">0</div><div class="t" style="left:602px;top:253.09px;font-size:11px;color:#000;transform:scaleX(0.985);">19</div><div class="t" style="left:652px;top:253.09px;font-size:11px;color:#000;transform:scaleX(0.985);">0</div><div class="t" style="left:150px;top:267.09px;font-size:11px;color:#000;transform:scaleX(0.985);">151.7.207.38</div><div class="t" style="left:342px;top:267.09px;font-size:11px;color:#000;transform:scaleX(0.985);">2</div><div class="t" style="left:372px;top:267.09px;font-size:11px;color:#000;transform:scaleX(0.985);">0</div><div class="t" style="left:422px;top:267.09px;font-size:11px;color:#000;transform:scaleX(0.985);">4710</div><div class="t" style="left:462px;top:267.09px;font-size:11px;color:#000;transform:scaleX(0.985);">4710</div><div class="t" style="left:502px;top:267.09px;font-size:11px;color:#000;transform:scaleX(0.985);">1</div><div class="t" style="left:552px;top:267.09px;font-size:11px;color:#000;transform:scaleX(0.985);">7</div><div class="t" style="left:602px;top:267.09px;font-size:11px;color:#000;transform:scaleX(0.985);">92</div><div class="t" style="left:652px;top:267.09px;font-size:11px;color:#000;transform:scaleX(0.985);">1</div><div class="t" style="left:150px;top:281.09px;font-size:11px;color:#000;transform:scaleX(0.985);">151.7.207.34</div><div class="t" style="left:342px;top:281.09px;font-size:11px;color:#000;transform:scaleX(0.985);">3</div><div class="t" style="left:372px;top:281.09px;font-size:11px;color:#000;transform:scaleX(0.985);">0</div><div class="t" style="left:422px;top:281.09px;font-size:11px;color:#000;transform:scaleX(0.985);">4710</div><div class="t" style="left:462px;top:281.09px;font-size:11px;color:#000;transform:scaleX(0.985);">4710</div><div class="t" style="left:502px;top:281.09px;font-size:11px;color:#000;transform:scaleX(0.985);">1</div><div class="t" style="left:552px;top:281.09px;font-size:11px;color:#000;transform:scaleX(0.985);">3</div><div class="t" style="left:602px;top:281.09px;font-size:11px;color:#000;transform:scaleX(0.985);">66</div><div class="t" style="left:652px;top:281.09px;font-size:11px;color:#000;transform:scaleX(0.985);">2</div><div style="left:148px;top:293px;width:65px;height:14px;background:#0078d7"></div><div class="t" style="left:150px;top:295.09px;font-size:11px;color:#fff;transform:scaleX(0.985);">151.6.5.109</div><div class="t" style="left:342px;top:295.09px;font-size:11px;color:#000;transform:scaleX(0.985);">4</div><div class="t" style="left:372px;top:295.09px;font-size:11px;color:#000;transform:scaleX(0.985);">1</div><div class="t" style="left:422px;top:295.09px;font-size:11px;color:#000;transform:scaleX(0.985);">4702</div><div class="t" style="left:462px;top:295.09px;font-size:11px;color:#000;transform:scaleX(0.985);">4700</div><div class="t" style="left:502px;top:295.09px;font-size:11px;color:#000;transform:scaleX(0.985);">10</div><div class="t" style="left:552px;top:295.09px;font-size:11px;color:#000;transform:scaleX(0.985);">10</div><div class="t" style="left:602px;top:295.09px;font-size:11px;color:#000;transform:scaleX(0.985);">52</div><div class="t" style="left:652px;top:295.09px;font-size:11px;color:#000;transform:scaleX(0.985);">10</div><div class="t" style="left:150px;top:309.09px;font-size:11px;color:#000;transform:scaleX(0.985);">151.6.5.237</div><div class="t" style="left:342px;top:309.09px;font-size:11px;color:#000;transform:scaleX(0.985);">5</div><div class="t" style="left:372px;top:309.09px;font-size:11px;color:#000;transform:scaleX(0.985);">0</div><div class="t" style="left:422px;top:309.09px;font-size:11px;color:#000;transform:scaleX(0.985);">4710</div><div class="t" style="left:462px;top:309.09px;font-size:11px;color:#000;transform:scaleX(0.985);">4710</div><div class="t" style="left:502px;top:309.09px;font-size:11px;color:#000;transform:scaleX(0.985);">9</div><div class="t" style="left:552px;top:309.09px;font-size:11px;color:#000;transform:scaleX(0.985);">11</div><div class="t" style="left:602px;top:309.09px;font-size:11px;color:#000;transform:scaleX(0.985);">68</div><div class="t" style="left:652px;top:309.09px;font-size:11px;color:#000;transform:scaleX(0.985);">10</div><div class="t" style="left:150px;top:323.09px;font-size:11px;color:#000;transform:scaleX(0.985);">151.6.1.222</div><div class="t" style="left:342px;top:323.09px;font-size:11px;color:#000;transform:scaleX(0.985);">6</div><div class="t" style="left:372px;top:323.09px;font-size:11px;color:#000;transform:scaleX(0.985);">1</div><div class="t" style="left:422px;top:323.09px;font-size:11px;color:#000;transform:scaleX(0.985);">4707</div><div class="t" style="left:462px;top:323.09px;font-size:11px;color:#000;transform:scaleX(0.985);">4706</div><div class="t" style="left:502px;top:323.09px;font-size:11px;color:#000;transform:scaleX(0.985);">21</div><div class="t" style="left:552px;top:323.09px;font-size:11px;color:#000;transform:scaleX(0.985);">21</div><div class="t" style="left:602px;top:323.09px;font-size:11px;color:#000;transform:scaleX(0.985);">83</div><div class="t" style="left:652px;top:323.09px;font-size:11px;color:#000;transform:scaleX(0.985);">21</div><div class="t" style="left:150px;top:337.09px;font-size:11px;color:#000;transform:scaleX(0.985);">172.253.72.111</div><div class="t" style="left:342px;top:337.09px;font-size:11px;color:#000;transform:scaleX(0.985);">7</div><div class="t" style="left:372px;top:337.09px;font-size:11px;color:#000;transform:scaleX(0.985);">0</div><div class="t" style="left:422px;top:337.09px;font-size:11px;color:#000;transform:scaleX(0.985);">4710</div><div class="t" style="left:462px;top:337.09px;font-size:11px;color:#000;transform:scaleX(0.985);">4710</div><div class="t" style="left:502px;top:337.09px;font-size:11px;color:#000;transform:scaleX(0.985);">19</div><div class="t" style="left:552px;top:337.09px;font-size:11px;color:#000;transform:scaleX(0.985);">20</div><div class="t" style="left:602px;top:337.09px;font-size:11px;color:#000;transform:scaleX(0.985);">46</div><div class="t" style="left:652px;top:337.09px;font-size:11px;color:#000;transform:scaleX(0.985);">19</div><div class="t" style="left:150px;top:351.09px;font-size:11px;color:#000;transform:scaleX(0.985);">108.170.232.169</div><div class="t" style="left:342px;top:351.09px;font-size:11px;color:#000;transform:scaleX(0.985);">8</div><div class="t" style="left:372px;top:351.09px;font-size:11px;color:#000;transform:scaleX(0.985);">0</div><div class="t" style="left:422px;top:351.09px;font-size:11px;color:#000;transform:scaleX(0.985);">4710</div><div class="t" style="left:462px;top:351.09px;font-size:11px;color:#000;transform:scaleX(0.985);">4710</div><div class="t" style="left:502px;top:351.09px;font-size:11px;color:#000;transform:scaleX(0.985);">22</div><div class="t" style="left:552px;top:351.09px;font-size:11px;color:#000;transform:scaleX(0.985);">23</div><div class="t" style="left:602px;top:351.09px;font-size:11px;color:#000;transform:scaleX(0.985);">56</div><div class="t" style="left:652px;top:351.09px;font-size:11px;color:#000;transform:scaleX(0.985);">23</div><div class="t" style="left:150px;top:365.09px;font-size:11px;color:#000;transform:scaleX(0.985);">dns.google</div><div class="t" style="left:342px;top:365.09px;font-size:11px;color:#000;transform:scaleX(0.985);">9</div><div class="t" style="left:372px;top:365.09px;font-size:11px;color:#000;transform:scaleX(0.985);">0</div><div class="t" style="left:422px;top:365.09px;font-size:11px;color:#000;transform:scaleX(0.985);">4710</div><div class="t" style="left:462px;top:365.09px;font-size:11px;color:#000;transform:scaleX(0.985);">4710</div><div class="t" style="left:502px;top:365.09px;font-size:11px;color:#000;transform:scaleX(0.985);">22</div><div class="t" style="left:552px;top:365.09px;font-size:11px;color:#000;transform:scaleX(0.985);">22</div><div class="t" style="left:602px;top:365.09px;font-size:11px;color:#000;transform:scaleX(0.985);">56</div><div class="t" style="left:652px;top:365.09px;font-size:11px;color:#000;transform:scaleX(0.985);">23</div><div style="left:133px;top:505px;width:499px;height:1px;background:#a0a0a0"></div><div style="left:635px;top:505px;width:106px;height:1px;background:#a0a0a0"></div><div style="left:635px;top:505px;width:1px;height:21px;background:#a0a0a0"></div><div style="left:740px;top:505px;width:1px;height:21px;background:#fff"></div><div class="t" style="left:135.7px;top:509.64px;font-size:12px;color:#000;transform:scaleX(1.01);">Double click on host name for more information.</div><div class="t" style="left:639px;top:510.69px;font-size:11px;color:#0066cc;transform:scaleX(0.99);text-decoration:underline;">www.appnor.com</div><svg style="position:absolute;left:744px;top:510px" width="16" height="16">
<path d="M2 15.5 L14.5 3 M7.5 15.5 L14.5 8.5" stroke="#8a8a8a" stroke-width="1.2"/></svg><div style="left:136px;top:538px;width:585px;height:391px;background:#f0f0f0;border-radius:8px;overflow:hidden"><div style="left:0;top:0;width:585px;height:40px;background:linear-gradient(#cdcdcd,#dedede 45%,#eaeaea 85%,#f0f0f0)"></div></div><svg style="position:absolute;left:144px;top:545px" width="17" height="14" viewBox="0 0 17 14">
<rect x="0.5" y="0.5" width="15" height="3" fill="#8a8a8a" stroke="#2a2a2a" stroke-width="1"/>
<rect x="1.5" y="1.5" width="1" height="1" fill="#fff"/>
<rect x="5" y="3.5" width="6" height="9.5" rx="1.2" fill="#2e2e2e"/>
<rect x="6.5" y="5" width="1.5" height="3" fill="#9a9a9a"/><rect x="8" y="8.5" width="2" height="3" fill="#777"/>
</svg><div class="t" style="left:166.8px;top:546.44px;font-size:12px;color:#8a8a8a;transform:scaleX(1.0);">WinMTR v0.92 64 bit by Appnor MSP - www.winmtr.net</div><svg style="position:absolute;left:591px;top:538px" width="130" height="30" viewBox="0 0 130 30">
<line x1="11" y1="14.5" x2="21" y2="14.5" stroke="#888" stroke-width="1"/>
<rect x="56.5" y="9.5" width="9" height="9" rx="1.5" fill="none" stroke="#888" stroke-width="1"/>
<path d="M101.5 9.5 L111.5 19.5 M111.5 9.5 L101.5 19.5" stroke="#888" stroke-width="1"/>
</svg><div style="left:147px;top:579px;width:377px;height:1px;background:#6d6d6d"></div><div style="left:147px;top:579px;width:1px;height:41px;background:#6d6d6d"></div><div style="left:147px;top:619px;width:377px;height:1px;background:#6d6d6d"></div><div style="left:523px;top:579px;width:1px;height:41px;background:#6d6d6d"></div><div style="left:148px;top:580px;width:375px;height:1px;background:#fff"></div><div style="left:148px;top:580px;width:1px;height:39px;background:#fff"></div><div style="left:148px;top:620px;width:377px;height:1px;background:#fff"></div><div style="left:524px;top:580px;width:1px;height:41px;background:#fff"></div><div style="left:531px;top:579px;width:180px;height:1px;background:#6d6d6d"></div><div style="left:531px;top:579px;width:1px;height:41px;background:#6d6d6d"></div><div style="left:531px;top:619px;width:180px;height:1px;background:#6d6d6d"></div><div style="left:710px;top:579px;width:1px;height:41px;background:#6d6d6d"></div><div style="left:532px;top:580px;width:178px;height:1px;background:#fff"></div><div style="left:532px;top:580px;width:1px;height:39px;background:#fff"></div><div style="left:532px;top:620px;width:180px;height:1px;background:#fff"></div><div style="left:711px;top:580px;width:1px;height:41px;background:#fff"></div><div style="left:147px;top:624px;width:564px;height:1px;background:#6d6d6d"></div><div style="left:147px;top:624px;width:1px;height:36px;background:#6d6d6d"></div><div style="left:147px;top:659px;width:564px;height:1px;background:#6d6d6d"></div><div style="left:710px;top:624px;width:1px;height:36px;background:#6d6d6d"></div><div style="left:148px;top:625px;width:562px;height:1px;background:#fff"></div><div style="left:148px;top:625px;width:1px;height:34px;background:#fff"></div><div style="left:148px;top:660px;width:564px;height:1px;background:#fff"></div><div style="left:711px;top:625px;width:1px;height:36px;background:#fff"></div><div class="t" style="left:156px;top:594.19px;font-size:11px;color:#000;transform:scaleX(0.95);">Host:</div><div style="left:190px;top:588px;width:244px;height:20px;background:#f0f0f0"></div><div style="left:189px;top:588px;width:245px;height:1px;background:#a0a0a0"></div><div style="left:189px;top:588px;width:1px;height:20px;background:#a0a0a0"></div><div style="left:190px;top:589px;width:243px;height:1px;background:#696969"></div><div style="left:190px;top:589px;width:1px;height:18px;background:#696969"></div><div style="left:189px;top:607px;width:245px;height:1px;background:#fff"></div><div style="left:433px;top:588px;width:1px;height:20px;background:#fff"></div><div style="left:190px;top:606px;width:243px;height:1px;background:#e3e3e3"></div><div style="left:432px;top:589px;width:1px;height:18px;background:#e3e3e3"></div><div class="t" style="left:193px;top:593.29px;font-size:11px;color:#6d6d6d;transform:scaleX(0.96);">1.1.1.1</div><div style="left:416px;top:590px;width:16px;height:16px;background:#f0f0f0"></div><div style="left:416px;top:590px;width:16px;height:1px;background:#fff"></div><div style="left:416px;top:590px;width:1px;height:16px;background:#fff"></div><div style="left:416px;top:605px;width:17px;height:2px;background:#696969"></div><div style="left:431px;top:590px;width:2px;height:17px;background:#696969"></div><svg style="position:absolute;left:421.5px;top:597px" width="8" height="5"><path d="M0 0 L7 0 L3.5 4 Z" fill="#8a8a8a"/></svg><div style="left:441px;top:588px;width:73px;height:21px;border:1px solid #6e6e6e;background:#f0f0f0"></div><div style="left:442px;top:589px;width:71px;height:19px;border:1px solid #fff"></div><div class="t" style="left:441px;width:75px;text-align:center;top:593.59px;font-size:11px;color:#000;transform:scaleX(0.96);transform-origin:50% 0;">Stop</div><div style="left:541px;top:588px;width:75px;height:21px;border:1px solid #6e6e6e;background:#f0f0f0"></div><div style="left:542px;top:589px;width:73px;height:19px;border:1px solid #fff"></div><div class="t" style="left:541px;width:77px;text-align:center;top:593.59px;font-size:11px;color:#a0a0a0;transform:scaleX(0.96);transform-origin:50% 0;">Options</div><div style="left:626px;top:588px;width:72px;height:21px;border:1px solid #6e6e6e;background:#f0f0f0"></div><div style="left:627px;top:589px;width:70px;height:19px;border:1px solid #fff"></div><div class="t" style="left:626px;width:74px;text-align:center;top:593.59px;font-size:11px;color:#000;transform:scaleX(0.96);transform-origin:50% 0;">Exit</div><div style="left:157px;top:631px;width:132px;height:21px;border:1px solid #6e6e6e;background:#f0f0f0"></div><div style="left:158px;top:632px;width:130px;height:19px;border:1px solid #fff"></div><div class="t" style="left:157px;width:134px;text-align:center;top:636.59px;font-size:11px;color:#000;transform:scaleX(0.97);transform-origin:50% 0;">Copy Text to clipboard</div><div style="left:306px;top:631px;width:132px;height:21px;border:1px solid #6e6e6e;background:#f0f0f0"></div><div style="left:307px;top:632px;width:130px;height:19px;border:1px solid #fff"></div><div class="t" style="left:306px;width:134px;text-align:center;top:636.59px;font-size:11px;color:#000;transform:scaleX(0.968);transform-origin:50% 0;">Copy HTML to clipboard</div><div style="left:541px;top:631px;width:75px;height:21px;border:1px solid #6e6e6e;background:#f0f0f0"></div><div style="left:542px;top:632px;width:73px;height:19px;border:1px solid #fff"></div><div class="t" style="left:541px;width:77px;text-align:center;top:636.59px;font-size:11px;color:#000;transform:scaleX(0.955);transform-origin:50% 0;">Export TEXT</div><div style="left:626px;top:631px;width:72px;height:21px;border:1px solid #6e6e6e;background:#f0f0f0"></div><div style="left:627px;top:632px;width:70px;height:19px;border:1px solid #fff"></div><div class="t" style="left:626px;width:74px;text-align:center;top:636.59px;font-size:11px;color:#000;transform:scaleX(0.96);transform-origin:50% 0;">Export HTML</div><div style="left:147px;top:666px;width:564px;height:237px;background:#fff"></div><div style="left:147px;top:666px;width:564px;height:1px;background:#a0a0a0"></div><div style="left:147px;top:666px;width:1px;height:237px;background:#a0a0a0"></div><div style="left:148px;top:667px;width:562px;height:1px;background:#696969"></div><div style="left:148px;top:667px;width:1px;height:235px;background:#696969"></div><div style="left:147px;top:902px;width:564px;height:1px;background:#fff"></div><div style="left:710px;top:666px;width:1px;height:237px;background:#fff"></div><div style="left:148px;top:901px;width:562px;height:1px;background:#e3e3e3"></div><div style="left:709px;top:667px;width:1px;height:235px;background:#e3e3e3"></div><div style="left:149px;top:668px;width:560px;height:15px;background:#f0f0f0"></div><div style="left:149px;top:683px;width:560px;height:1px;background:#a0a0a0"></div><div class="t" style="left:155px;top:671.69px;font-size:11px;color:#000;transform:scaleX(0.95);">Hostname</div><div style="left:337px;top:668px;width:1px;height:15px;background:#a0a0a0"></div><div style="left:338px;top:668px;width:1px;height:15px;background:#fff"></div><div class="t" style="left:345px;top:671.69px;font-size:11px;color:#000;transform:scaleX(0.95);">Nr</div><div style="left:367px;top:668px;width:1px;height:15px;background:#a0a0a0"></div><div style="left:368px;top:668px;width:1px;height:15px;background:#fff"></div><div class="t" style="left:375px;top:671.69px;font-size:11px;color:#000;transform:scaleX(0.95);">Loss %</div><div style="left:417px;top:668px;width:1px;height:15px;background:#a0a0a0"></div><div style="left:418px;top:668px;width:1px;height:15px;background:#fff"></div><div class="t" style="left:425px;top:671.69px;font-size:11px;color:#000;transform:scaleX(0.95);">Sent</div><div style="left:457px;top:668px;width:1px;height:15px;background:#a0a0a0"></div><div style="left:458px;top:668px;width:1px;height:15px;background:#fff"></div><div class="t" style="left:465px;top:671.69px;font-size:11px;color:#000;transform:scaleX(0.95);">Recv</div><div style="left:497px;top:668px;width:1px;height:15px;background:#a0a0a0"></div><div style="left:498px;top:668px;width:1px;height:15px;background:#fff"></div><div class="t" style="left:505px;top:671.69px;font-size:11px;color:#000;transform:scaleX(0.95);">Best</div><div style="left:547px;top:668px;width:1px;height:15px;background:#a0a0a0"></div><div style="left:548px;top:668px;width:1px;height:15px;background:#fff"></div><div class="t" style="left:555px;top:671.69px;font-size:11px;color:#000;transform:scaleX(0.95);">Avrg</div><div style="left:597px;top:668px;width:1px;height:15px;background:#a0a0a0"></div><div style="left:598px;top:668px;width:1px;height:15px;background:#fff"></div><div class="t" style="left:605px;top:671.69px;font-size:11px;color:#000;transform:scaleX(0.95);">Worst</div><div style="left:647px;top:668px;width:1px;height:15px;background:#a0a0a0"></div><div style="left:648px;top:668px;width:1px;height:15px;background:#fff"></div><div class="t" style="left:655px;top:671.69px;font-size:11px;color:#000;transform:scaleX(0.95);">Last</div><div style="left:697px;top:668px;width:1px;height:15px;background:#a0a0a0"></div><div style="left:698px;top:668px;width:1px;height:15px;background:#fff"></div><div class="t" style="left:153px;top:687.09px;font-size:11px;color:#000;transform:scaleX(0.985);">192.168.0.254</div><div class="t" style="left:345px;top:687.09px;font-size:11px;color:#000;transform:scaleX(0.985);">1</div><div class="t" style="left:375px;top:687.09px;font-size:11px;color:#000;transform:scaleX(0.985);">17</div><div class="t" style="left:425px;top:687.09px;font-size:11px;color:#000;transform:scaleX(0.985);">2845</div><div class="t" style="left:465px;top:687.09px;font-size:11px;color:#000;transform:scaleX(0.985);">2369</div><div class="t" style="left:505px;top:687.09px;font-size:11px;color:#000;transform:scaleX(0.985);">0</div><div class="t" style="left:555px;top:687.09px;font-size:11px;color:#000;transform:scaleX(0.985);">0</div><div class="t" style="left:605px;top:687.09px;font-size:11px;color:#000;transform:scaleX(0.985);">23</div><div class="t" style="left:655px;top:687.09px;font-size:11px;color:#000;transform:scaleX(0.985);">0</div><div class="t" style="left:153px;top:701.09px;font-size:11px;color:#000;transform:scaleX(0.985);">151.7.207.38</div><div class="t" style="left:345px;top:701.09px;font-size:11px;color:#000;transform:scaleX(0.985);">2</div><div class="t" style="left:375px;top:701.09px;font-size:11px;color:#000;transform:scaleX(0.985);">0</div><div class="t" style="left:425px;top:701.09px;font-size:11px;color:#000;transform:scaleX(0.985);">4708</div><div class="t" style="left:465px;top:701.09px;font-size:11px;color:#000;transform:scaleX(0.985);">4708</div><div class="t" style="left:505px;top:701.09px;font-size:11px;color:#000;transform:scaleX(0.985);">0</div><div class="t" style="left:555px;top:701.09px;font-size:11px;color:#000;transform:scaleX(0.985);">7</div><div class="t" style="left:605px;top:701.09px;font-size:11px;color:#000;transform:scaleX(0.985);">139</div><div class="t" style="left:655px;top:701.09px;font-size:11px;color:#000;transform:scaleX(0.985);">1</div><div class="t" style="left:153px;top:715.09px;font-size:11px;color:#000;transform:scaleX(0.985);">151.7.207.34</div><div class="t" style="left:345px;top:715.09px;font-size:11px;color:#000;transform:scaleX(0.985);">3</div><div class="t" style="left:375px;top:715.09px;font-size:11px;color:#000;transform:scaleX(0.985);">1</div><div class="t" style="left:425px;top:715.09px;font-size:11px;color:#000;transform:scaleX(0.985);">4705</div><div class="t" style="left:465px;top:715.09px;font-size:11px;color:#000;transform:scaleX(0.985);">4704</div><div class="t" style="left:505px;top:715.09px;font-size:11px;color:#000;transform:scaleX(0.985);">1</div><div class="t" style="left:555px;top:715.09px;font-size:11px;color:#000;transform:scaleX(0.985);">3</div><div class="t" style="left:605px;top:715.09px;font-size:11px;color:#000;transform:scaleX(0.985);">79</div><div class="t" style="left:655px;top:715.09px;font-size:11px;color:#000;transform:scaleX(0.985);">1</div><div class="t" style="left:153px;top:729.09px;font-size:11px;color:#000;transform:scaleX(0.985);">151.6.3.59</div><div class="t" style="left:345px;top:729.09px;font-size:11px;color:#000;transform:scaleX(0.985);">4</div><div class="t" style="left:375px;top:729.09px;font-size:11px;color:#000;transform:scaleX(0.985);">1</div><div class="t" style="left:425px;top:729.09px;font-size:11px;color:#000;transform:scaleX(0.985);">4705</div><div class="t" style="left:465px;top:729.09px;font-size:11px;color:#000;transform:scaleX(0.985);">4704</div><div class="t" style="left:505px;top:729.09px;font-size:11px;color:#000;transform:scaleX(0.985);">13</div><div class="t" style="left:555px;top:729.09px;font-size:11px;color:#000;transform:scaleX(0.985);">14</div><div class="t" style="left:605px;top:729.09px;font-size:11px;color:#000;transform:scaleX(0.985);">62</div><div class="t" style="left:655px;top:729.09px;font-size:11px;color:#000;transform:scaleX(0.985);">14</div><div class="t" style="left:153px;top:743.09px;font-size:11px;color:#000;transform:scaleX(0.985);">151.6.1.213</div><div class="t" style="left:345px;top:743.09px;font-size:11px;color:#000;transform:scaleX(0.985);">5</div><div class="t" style="left:375px;top:743.09px;font-size:11px;color:#000;transform:scaleX(0.985);">1</div><div class="t" style="left:425px;top:743.09px;font-size:11px;color:#000;transform:scaleX(0.985);">4705</div><div class="t" style="left:465px;top:743.09px;font-size:11px;color:#000;transform:scaleX(0.985);">4704</div><div class="t" style="left:505px;top:743.09px;font-size:11px;color:#000;transform:scaleX(0.985);">11</div><div class="t" style="left:555px;top:743.09px;font-size:11px;color:#000;transform:scaleX(0.985);">12</div><div class="t" style="left:605px;top:743.09px;font-size:11px;color:#000;transform:scaleX(0.985);">37</div><div class="t" style="left:655px;top:743.09px;font-size:11px;color:#000;transform:scaleX(0.985);">12</div><div class="t" style="left:153px;top:757.09px;font-size:11px;color:#000;transform:scaleX(0.985);">cloudflare.rom.namex.it</div><div class="t" style="left:345px;top:757.09px;font-size:11px;color:#000;transform:scaleX(0.985);">6</div><div class="t" style="left:375px;top:757.09px;font-size:11px;color:#000;transform:scaleX(0.985);">3</div><div class="t" style="left:425px;top:757.09px;font-size:11px;color:#000;transform:scaleX(0.985);">4326</div><div class="t" style="left:465px;top:757.09px;font-size:11px;color:#000;transform:scaleX(0.985);">4225</div><div class="t" style="left:505px;top:757.09px;font-size:11px;color:#000;transform:scaleX(0.985);">12</div><div class="t" style="left:555px;top:757.09px;font-size:11px;color:#000;transform:scaleX(0.985);">20</div><div class="t" style="left:605px;top:757.09px;font-size:11px;color:#000;transform:scaleX(0.985);">148</div><div class="t" style="left:655px;top:757.09px;font-size:11px;color:#000;transform:scaleX(0.985);">15</div><div class="t" style="left:153px;top:771.09px;font-size:11px;color:#000;transform:scaleX(0.985);">one.one.one.one</div><div class="t" style="left:345px;top:771.09px;font-size:11px;color:#000;transform:scaleX(0.985);">7</div><div class="t" style="left:375px;top:771.09px;font-size:11px;color:#000;transform:scaleX(0.985);">3</div><div class="t" style="left:425px;top:771.09px;font-size:11px;color:#000;transform:scaleX(0.985);">4332</div><div class="t" style="left:465px;top:771.09px;font-size:11px;color:#000;transform:scaleX(0.985);">4232</div><div class="t" style="left:505px;top:771.09px;font-size:11px;color:#000;transform:scaleX(0.985);">13</div><div class="t" style="left:555px;top:771.09px;font-size:11px;color:#000;transform:scaleX(0.985);">14</div><div class="t" style="left:605px;top:771.09px;font-size:11px;color:#000;transform:scaleX(0.985);">56</div><div class="t" style="left:655px;top:771.09px;font-size:11px;color:#000;transform:scaleX(0.985);">15</div><div style="left:136px;top:908px;width:457px;height:1px;background:#a0a0a0"></div><div style="left:596px;top:908px;width:106px;height:1px;background:#a0a0a0"></div><div style="left:596px;top:908px;width:1px;height:21px;background:#a0a0a0"></div><div style="left:701px;top:908px;width:1px;height:21px;background:#fff"></div><div class="t" style="left:138.7px;top:912.64px;font-size:12px;color:#000;transform:scaleX(1.01);">Double click on host name for more information.</div><div class="t" style="left:600px;top:913.69px;font-size:11px;color:#0066cc;transform:scaleX(0.99);text-decoration:underline;">www.appnor.com</div><svg style="position:absolute;left:705px;top:913px" width="16" height="16">
<path d="M2 15.5 L14.5 3 M7.5 15.5 L14.5 8.5" stroke="#8a8a8a" stroke-width="1.2"/></svg></body></html>
